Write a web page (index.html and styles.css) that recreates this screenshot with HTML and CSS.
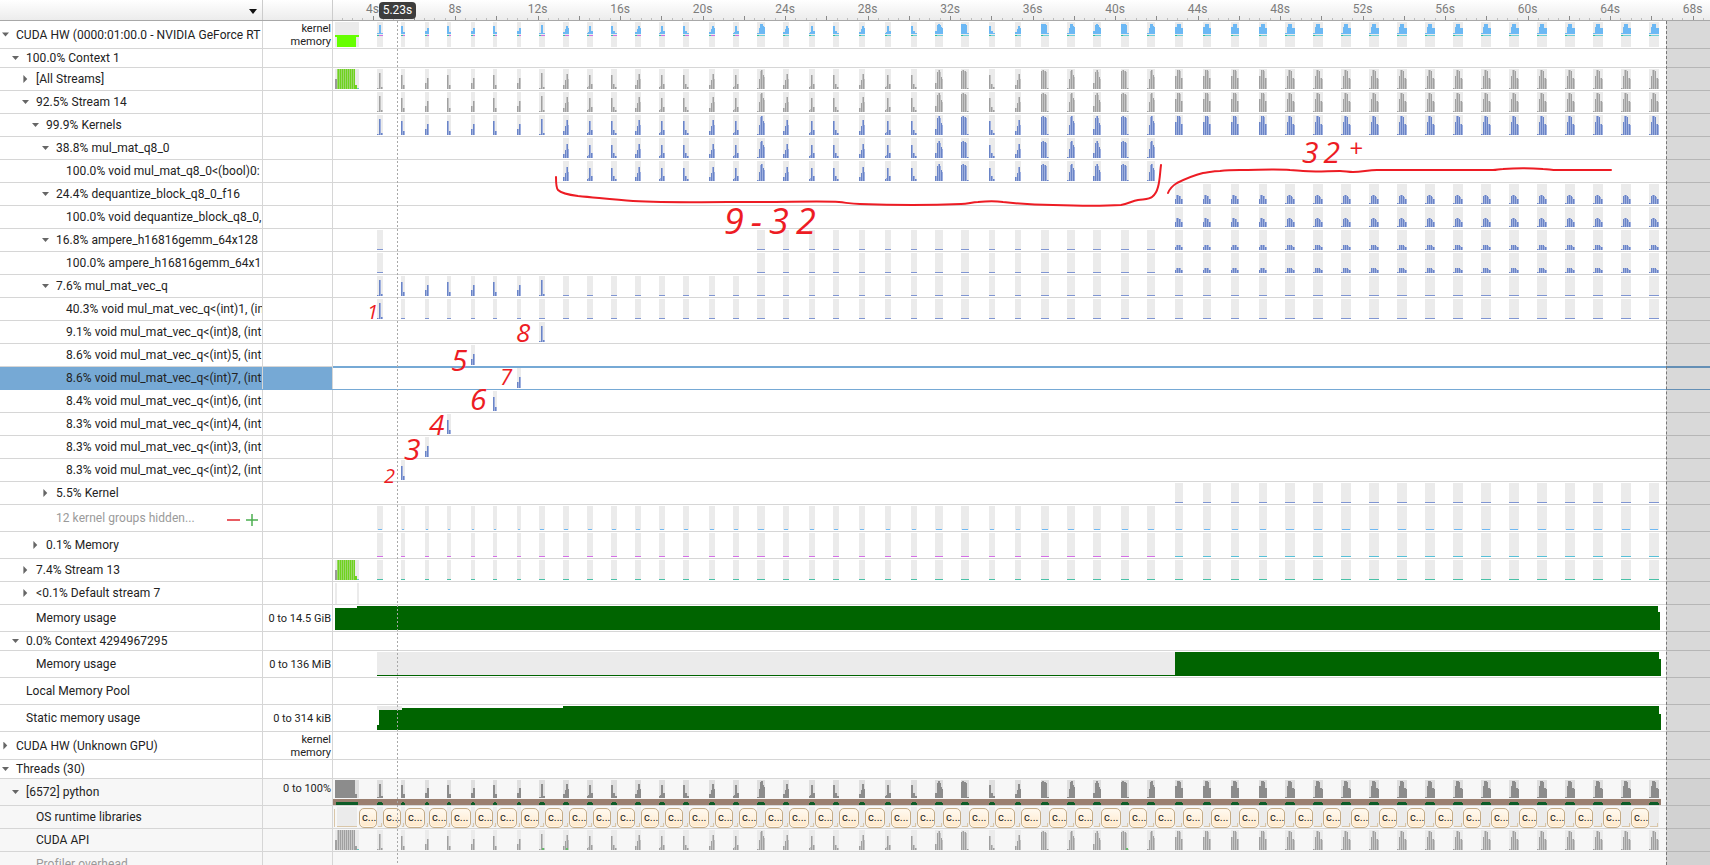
FILE: index.html
```html
<!DOCTYPE html>
<html lang="en">
<head>
    <meta charset="UTF-8">
    <title>Timeline View</title>
    <link rel="stylesheet" href="styles.css">
</head>
<body>
<div id="timeline">
    <div class="header">
        <div class="label"><i class="menu"></i></div>
        <div class="info"></div>
        <div class="ruler" id="ruler"></div>
    </div>

    <div class="row hw"><div class="label lvl0"><i class="arrow down"></i>CUDA HW (0000:01:00.0 - NVIDIA GeForce RT</div><div class="info">kernel<br>memory</div><div class="track" data-kind="hw"></div></div>
    <div class="row ctx"><div class="label lvl1"><i class="arrow down"></i>100.0% Context 1</div><div class="info"></div><div class="track"></div></div>
    <div class="row"><div class="label lvl2"><i class="arrow right"></i>[All Streams]</div><div class="info"></div><div class="track" data-kind="all"></div></div>
    <div class="row"><div class="label lvl2"><i class="arrow down"></i>92.5% Stream 14</div><div class="info"></div><div class="track" data-kind="gray"></div></div>
    <div class="row"><div class="label lvl3"><i class="arrow down"></i>99.9% Kernels</div><div class="info"></div><div class="track" data-kind="kernels"></div></div>
    <div class="row"><div class="label lvl4"><i class="arrow down"></i>38.8% mul_mat_q8_0</div><div class="info"></div><div class="track" data-kind="q8"></div></div>
    <div class="row"><div class="label lvl5">100.0% void mul_mat_q8_0&lt;(bool)0:</div><div class="info"></div><div class="track" data-kind="q8"></div></div>
    <div class="row"><div class="label lvl4"><i class="arrow down"></i>24.4% dequantize_block_q8_0_f16</div><div class="info"></div><div class="track" data-kind="deq"></div></div>
    <div class="row"><div class="label lvl5">100.0% void dequantize_block_q8_0,</div><div class="info"></div><div class="track" data-kind="deq"></div></div>
    <div class="row"><div class="label lvl4"><i class="arrow down"></i>16.8% ampere_h16816gemm_64x128</div><div class="info"></div><div class="track" data-kind="amp"></div></div>
    <div class="row"><div class="label lvl5">100.0% ampere_h16816gemm_64x1</div><div class="info"></div><div class="track" data-kind="amp"></div></div>
    <div class="row"><div class="label lvl4"><i class="arrow down"></i>7.6% mul_mat_vec_q</div><div class="info"></div><div class="track" data-kind="vec"></div></div>
    <div class="row"><div class="label lvl5">40.3% void mul_mat_vec_q&lt;(int)1, (in</div><div class="info"></div><div class="track" data-kind="vec1"></div></div>
    <div class="row"><div class="label lvl5">9.1% void mul_mat_vec_q&lt;(int)8, (int</div><div class="info"></div><div class="track" data-kind="one" data-x="539"></div></div>
    <div class="row"><div class="label lvl5">8.6% void mul_mat_vec_q&lt;(int)5, (int</div><div class="info"></div><div class="track" data-kind="one" data-x="471"></div></div>
    <div class="row selected"><div class="label lvl5">8.6% void mul_mat_vec_q&lt;(int)7, (int</div><div class="info"></div><div class="track" data-kind="one" data-x="517"></div></div>
    <div class="row"><div class="label lvl5">8.4% void mul_mat_vec_q&lt;(int)6, (int</div><div class="info"></div><div class="track" data-kind="one" data-x="493"></div></div>
    <div class="row"><div class="label lvl5">8.3% void mul_mat_vec_q&lt;(int)4, (int</div><div class="info"></div><div class="track" data-kind="one" data-x="447"></div></div>
    <div class="row"><div class="label lvl5">8.3% void mul_mat_vec_q&lt;(int)3, (int</div><div class="info"></div><div class="track" data-kind="one" data-x="425"></div></div>
    <div class="row"><div class="label lvl5">8.3% void mul_mat_vec_q&lt;(int)2, (int</div><div class="info"></div><div class="track" data-kind="one" data-x="401"></div></div>
    <div class="row"><div class="label lvl4"><i class="arrow right"></i>5.5% Kernel</div><div class="info"></div><div class="track" data-kind="kernel55"></div></div>
    <div class="row tall">
        <div class="label lvl4 muted">12 kernel groups hidden...
            <svg class="group-btns" width="32" height="12" viewBox="0 0 32 12"><path class="minus" d="M0 6H13"/><path class="plus" d="M19 6H31M25 0V12"/></svg>
        </div>
        <div class="info"></div><div class="track" data-kind="hidden"></div>
    </div>
    <div class="row tall"><div class="label lvl3"><i class="arrow right"></i>0.1% Memory</div><div class="info"></div><div class="track" data-kind="memory"></div></div>
    <div class="row"><div class="label lvl2"><i class="arrow right"></i>7.4% Stream 13</div><div class="info"></div><div class="track" data-kind="stream13"></div></div>
    <div class="row"><div class="label lvl2"><i class="arrow right"></i>&lt;0.1% Default stream 7</div><div class="info"></div><div class="track" data-kind="default"></div></div>
    <div class="row tall"><div class="label lvl2">Memory usage</div><div class="info">0 to 14.5 GiB</div><div class="track" data-kind="mem1"></div></div>
    <div class="row ctx"><div class="label lvl1"><i class="arrow down"></i>0.0% Context 4294967295</div><div class="info"></div><div class="track"></div></div>
    <div class="row tall"><div class="label lvl2">Memory usage</div><div class="info">0 to 136 MiB</div><div class="track" data-kind="mem2"></div></div>
    <div class="row tall"><div class="label lvl1">Local Memory Pool</div><div class="info"></div><div class="track"></div></div>
    <div class="row tall"><div class="label lvl1">Static memory usage</div><div class="info">0 to 314 kiB</div><div class="track" data-kind="static"></div></div>
    <div class="row hw"><div class="label lvl0"><i class="arrow right"></i>CUDA HW (Unknown GPU)</div><div class="info">kernel<br>memory</div><div class="track"></div></div>
    <div class="row ctx"><div class="label lvl0"><i class="arrow down"></i>Threads (30)</div><div class="info"></div><div class="track"></div></div>
    <div class="row tall thread"><div class="label lvl1"><i class="arrow down"></i>[6572] python</div><div class="info top">0 to 100%</div><div class="track" data-kind="python"></div></div>
    <div class="row thread"><div class="label lvl2">OS runtime libraries</div><div class="info"></div><div class="track" data-kind="osrt"></div></div>
    <div class="row thread"><div class="label lvl2">CUDA API</div><div class="info"></div><div class="track" data-kind="api"></div></div>
    <div class="row thread last"><div class="label lvl2 muted">Profiler overhead</div><div class="info"></div><div class="track"></div></div>

    <div class="out-of-range"></div>
    <div class="playhead"></div>
    <div class="time-tip">5.23s</div>

    <!-- red marks somebody drew on top of the capture -->
    <svg class="notes" width="1710" height="865" viewBox="0 0 1710 865">
        <path d="M556 177C556 183 556 188 558 190C562 194 570 195 578 196C600 198 615 200 633 201C670 203 720 202 755 202C790 202 825 201 839 202C848 203 852 204 860 204C890 205 935 205 961 204C968 204 972 202 978 202C988 201 996 201 1003 202C1020 204 1035 205 1053 205C1080 206 1105 206 1121 205C1128 204 1132 201 1138 200C1145 199 1150 199 1152 197C1156 194 1157 191 1158 187C1160 180 1160 172 1161 165"/>
        <path d="M1168 193C1170 188 1172 186 1177 183C1185 179 1195 175 1203 173C1210 172 1214 171 1220 171C1228 170 1234 170 1240 170C1258 170 1275 169 1290 170C1296 170 1298 171 1303 171C1315 172 1328 171 1340 171C1345 171 1348 172 1353 172C1362 172 1368 170 1377 170C1415 170 1455 170 1493 170C1497 170 1499 169 1503 169C1516 168 1530 168 1543 169C1548 169 1551 170 1557 170C1575 170 1593 170 1611 170"/>
        <text class="n20" x="367" y="319">1</text>
        <text class="n26" x="516" y="342">8</text>
        <text class="n30" x="451" y="371">5</text>
        <text class="n22" x="500" y="385">7</text>
        <text class="n30" x="470" y="410">6</text>
        <text class="n28" x="429" y="435">4</text>
        <text class="n30" x="404" y="460">3</text>
        <text class="n20" x="384" y="483">2</text>
        <text class="n36 wider" x="724" y="234">9-32</text>
        <text class="n30 wide" x="1302" y="163">32</text>
        <text class="n24" x="1349" y="157">+</text>
    </svg>
</div>
<script src="app.js"></script>
</body>
</html>
```
FILE: styles.css
```css
*{
    margin:0;
    padding:0;
    box-sizing:border-box;
}
html,body{
    height:100%;
    overflow:hidden;
    background:#ffffff;
}
#timeline{
    position:relative;
    width:1710px;
    height:865px;
    overflow:hidden;
    font-family:Roboto,"Liberation Sans",sans-serif;
    font-size:12px;
    color:#222222;
}
.header{
    display:grid;
    grid-template-columns:263px 70px 1fr;
    height:21px;
    border-bottom:1px solid #a8a8a8;
    background:linear-gradient(#ffffff,#ececec);
}
.header .label,.header .info{
    display:flex;
    justify-content:flex-end;
    align-items:center;
    padding:0;
    border-right:1px solid #cccccc;
}
.menu{
    width:0;
    height:0;
    margin:3px 5px 0 0;
    border-left:4px solid transparent;
    border-right:4px solid transparent;
    border-top:5px solid #111111;
}
.ruler{
    position:relative;
}
.ruler svg{
    position:absolute;
    left:0;
    top:0;
}
.ruler span{
    position:absolute;
    top:2px;
    transform:translateX(-50%);
    color:#7c7c7c;
    line-height:14px;
}
.row{
    display:grid;
    grid-template-columns:263px 70px 1fr;
    height:23px;
    border-bottom:1px solid #d6d6d6;
}
.row.tall{
    height:27px;
}
.row.hw{
    height:28px;
}
.row.ctx{
    height:19px;
}
.row.thread{
    background:#f7f7f7;
}
.row.last{
    border-bottom:0;
}
.label{
    display:flex;
    align-items:center;
    overflow:hidden;
    white-space:nowrap;
    letter-spacing:.05px;
    border-right:1px solid #d6d6d6;
}
.lvl0{padding-left:16px;}
.lvl1{padding-left:26px;}
.lvl2{padding-left:36px;}
.lvl3{padding-left:46px;}
.lvl4{padding-left:56px;}
.lvl5{padding-left:66px;}
.muted{
    color:#9a9a9a;
}
.arrow{
    flex:none;
    width:7px;
    height:8px;
    margin-left:-14px;
    margin-right:7px;
    background:#666666;
}
.arrow.down{
    clip-path:polygon(0 25%,100% 25%,50% 75%);
}
.arrow.right{
    clip-path:polygon(20% 0,75% 50%,20% 100%);
}
.group-btns{
    flex:none;
    margin-left:32px;
    margin-top:3px;
}
.group-btns path{
    fill:none;
    stroke-width:1.5;
}
.minus{
    stroke:#e0262e;
}
.plus{
    stroke:#4caf50;
}
.info{
    display:flex;
    align-items:center;
    justify-content:flex-end;
    padding-right:1px;
    font-size:11px;
    text-align:right;
    line-height:13px;
    white-space:nowrap;
    border-right:1px solid #d6d6d6;
}
.info.top{
    align-items:flex-start;
    padding-top:3px;
}
.track{
    position:relative;
    overflow:hidden;
}
.track svg{
    display:block;
}
.selected .label,.selected .info{
    background:#76a9d5;
}
.selected{
    border-bottom-color:#76a9d5;
}
.selected .track{
    box-shadow:0 -1px 0 #76a9d5,inset 0 1px 0 #76a9d5;
    overflow:visible;
}
.rt-box{
    position:absolute;
    top:2px;
    height:20px;
    padding-left:2px;
    overflow:hidden;
    border:1px solid #c4ab86;
    border-radius:5px;
    background:linear-gradient(#fffaf1,#ffe8c9);
    box-shadow:inset 0 0 0 1px #fff6e8;
    color:#222222;
    font-size:11px;
    line-height:17px;
    white-space:nowrap;
}
.out-of-range{
    position:absolute;
    left:1666px;
    top:21px;
    right:0;
    bottom:0;
    border-left:1px dashed #777777;
    background:rgba(0,0,0,.15);
}
.playhead{
    position:absolute;
    left:397px;
    top:21px;
    bottom:0;
    width:1px;
    background:repeating-linear-gradient(#a8a8a8 0 2px,transparent 2px 4px);
}
.time-tip{
    position:absolute;
    left:379px;
    top:2px;
    width:37px;
    height:17px;
    border-radius:4px;
    background:#3d3d3d;
    color:#ffffff;
    text-align:center;
    line-height:17px;
}
.notes{
    position:absolute;
    left:0;
    top:0;
    pointer-events:none;
}
.notes path{
    fill:none;
    stroke:#ed1c24;
    stroke-width:2;
    stroke-linecap:round;
}
.notes text{
    fill:#ed1c24;
    font-family:"Open Sans",sans-serif;
    font-style:italic;
}
.notes .wide{
    letter-spacing:5px;
}
.notes .wider{
    letter-spacing:7px;
}
.n20{font-size:20px;}
.n22{font-size:22px;}
.n24{font-size:24px;}
.n26{font-size:26px;}
.n28{font-size:28px;}
.n30{font-size:30px;}
.n36{font-size:36px;}
```
FILE: app.js
```js
var NS = 'http://www.w3.org/2000/svg';
var TRACK_LEFT = 333;
var BLUE = ['#6a84c6', '#9fb0df'];
var GRAY = ['#a0a0a0', '#c4c4c4'];
var GREEN = ['#6fd21e', '#9ad86a'];
var STRIPES = ['#a0a0a0', '#c8c8c8'];

// left edge and width of every burst, read off the capture
var xs = [377,401,425,447,471,493,517,539,563,587,611,635,659,683,709,733,757,783,809,833,859,885,911,935,961,989,1015,1041,1067,1093,1121,1147,
    1175,1203,1231,1259,1285,1313,1341,1369,1397,1425,1453,1481,1509,1537,1565,1593,1621,1649];
var ws = [6,4,4,4,4,4,4,6,6,6,6,6,6,6,6,6,8,6,6,6,6,6,6,8,8,6,6,8,8,8,8,8,
    8,8,8,8,10,10,10,10,10,10,10,10,10,10,10,10,10,10];
var bursts = [];
for (var i = 0; i < xs.length; i++) {
    bursts.push({x: xs[i], w: ws[i], i: i});
}

var P4 = [[.3,.3,.55,.55],[.7,.7,.2,.2]];
var P6 = [[.05,.05,.8,.8,.12,.12],[.1,.15,.7,.7,.25,.25],[.7,.7,.25,.25,.1,.1],[.2,.2,.45,.75,.75,.5]];
var P8 = [[.9,.95,.95,.9,.9,.85,.05,.05],[.05,.05,.5,.9,.95,.95,.7,.6],[.3,.3,.85,.95,.95,.85,.6,.5]];
var LATE8 = [.65,.65,.95,.95,.95,.9,.55,.55];
var LATE10 = [.05,.05,.65,.95,.95,.95,.9,.55,.55,.5];
var SMALL8 = [.5,.85,.9,.9,.75,.75,.5,.45];
var SMALL10 = [.05,.05,.8,.85,.9,.9,.75,.7,.5,.45];

function shape(b) {
    if (b.w == 4) return P4[b.i % 2];
    if (b.i > 31) return b.w == 8 ? LATE8 : LATE10;
    if (b.w == 6) return P6[b.i == 0 || b.i == 7 ? 0 : 1 + b.i % 3];
    return P8[b.i % 3];
}

function smallShape(b) {
    return b.w == 8 ? SMALL8 : SMALL10;
}

function rect(svg, x, y, w, h, fill) {
    var r = document.createElementNS(NS, 'rect');
    r.setAttribute('x', x);
    r.setAttribute('y', y);
    r.setAttribute('width', w);
    r.setAttribute('height', h);
    r.setAttribute('fill', fill);
    svg.appendChild(r);
}

function bars(svg, b, base, max, heights, colors) {
    for (var k = 0; k < heights.length; k++) {
        var h = Math.max(1, Math.round(heights[k] * max));
        rect(svg, b.x + k, base - h, 1, h, colors[k % colors.length]);
    }
}

function burstBg(svg, b, top, h, color) {
    rect(svg, b.x, top, b.w, h, color || '#ebebeb');
}

// the solid block at the start of a run, 335 to 359
function bigBlock(svg, top, base, colors, left) {
    rect(svg, 335, top, 24, base - top, '#ebebeb');
    rect(svg, 335, base - 10, 2, 10, left);
    for (var x = 337; x < 355; x++) {
        rect(svg, x, top, 1, base - top, colors[x % 2]);
    }
    rect(svg, 355, base - 4, 2, 4, colors[0]);
    rect(svg, 357, base - 1, 2, 1, '#66c8c0');
}

function drawTrack(track) {
    var kind = track.getAttribute('data-kind');
    if (!kind) return;
    var box = track.getBoundingClientRect();
    var top = box.top;
    var height = Math.round(box.height);
    var svg = document.createElementNS(NS, 'svg');
    svg.setAttribute('width', box.width);
    svg.setAttribute('height', height);
    svg.setAttribute('viewBox', TRACK_LEFT + ' ' + top + ' ' + box.width + ' ' + height);
    track.appendChild(svg);

    var bgTop = top + 1;
    var bgH = height - 2;
    var base = top + height - 1;
    var n, b, x;

    for (n = 0; n < bursts.length; n++) {
        b = bursts[n];
        x = b.x;
        if (kind == 'hw') {
            burstBg(svg, b, bgTop, bgH);
            bars(svg, b, top + 13, 11, shape(b), ['#6cb8f4']);
            rect(svg, x, top + 14, b.w, 1, b.i < 16 ? '#d070e0' : '#6fd0d8');
            rect(svg, x, top + 14, 2, 1, b.i < 16 ? '#35c0a6' : '#2fc09a');
        } else if (kind == 'all' || kind == 'gray' || kind == 'api') {
            burstBg(svg, b, bgTop, bgH);
            bars(svg, b, base, 20, shape(b), GRAY);
            if (kind == 'api' && (x == 539 || x == 563 || x == 1121)) rect(svg, x + b.w - 3, base - 2, 2, 2, '#66bb6a');
        } else if (kind == 'kernels') {
            burstBg(svg, b, bgTop, bgH);
            bars(svg, b, base, 20, shape(b), BLUE);
        } else if (kind == 'q8') {
            if (x < 563 || x > 1147) continue;
            burstBg(svg, b, bgTop, bgH);
            bars(svg, b, base, 18, shape(b), BLUE);
        } else if (kind == 'deq') {
            if (x < 1175) continue;
            burstBg(svg, b, bgTop, bgH);
            bars(svg, b, base, 10, smallShape(b), BLUE);
        } else if (kind == 'amp') {
            if (x != 377 && x < 757) continue;
            burstBg(svg, b, bgTop, bgH);
            if (x < 1175) rect(svg, x, base - 1, b.w, 1, '#7f95d2');
            else bars(svg, b, base, 6, smallShape(b), BLUE);
        } else if (kind == 'vec') {
            burstBg(svg, b, bgTop, bgH);
            if (x <= 539) bars(svg, b, base, 20, shape(b), BLUE);
            else rect(svg, x, base - 1, b.w, 1, '#7f95d2');
        } else if (kind == 'vec1') {
            burstBg(svg, b, bgTop, bgH);
            if (x == 377) bars(svg, b, base, 20, shape(b), BLUE);
            else rect(svg, x, base - 1, b.w, 1, '#7f95d2');
        } else if (kind == 'one') {
            if (x != +track.getAttribute('data-x')) continue;
            burstBg(svg, b, bgTop, bgH);
            bars(svg, b, base, 20, shape(b), BLUE);
        } else if (kind == 'kernel55') {
            if (x < 1175) continue;
            burstBg(svg, b, bgTop, bgH);
            rect(svg, x, base - 1, b.w, 1, '#7f95d2');
        } else if (kind == 'hidden') {
            burstBg(svg, b, bgTop, bgH);
            rect(svg, x + 1, base - 1, b.w - 2, 1, '#6cb8f4');
        } else if (kind == 'memory') {
            burstBg(svg, b, bgTop, bgH);
            rect(svg, x, base - 1, b.w, 1, b.i < 32 ? '#d46fe6' : '#56c0d8');
        } else if (kind == 'stream13') {
            burstBg(svg, b, bgTop, bgH);
            rect(svg, x, base - 1, b.w, 1, '#46c0a6');
        } else if (kind == 'python') {
            burstBg(svg, b, bgTop, 18, '#dfdfdf');
            bars(svg, b, top + 19, 18, shape(b), ['#8c8c8c']);
        } else if (kind == 'osrt') {
            burstBg(svg, b, bgTop, bgH);
            rect(svg, x + b.w - 2, base - 4, 1, 4, '#d9c6a8');
            rect(svg, x + 1, base - 1, b.w - 3, 1, '#d9c6a8');
        }
    }

    if (kind == 'hw') {
        rect(svg, 335, top + 1, 24, height - 2, '#ebebeb');
        rect(svg, 335, top + 14, 24, 2, '#66ff00');
        rect(svg, 337, top + 16, 19, 10, '#66ff00');
    }
    if (kind == 'all' || kind == 'stream13') bigBlock(svg, bgTop, base, GREEN, '#9a9a9a');
    if (kind == 'api') bigBlock(svg, bgTop, base, STRIPES, STRIPES[0]);
    if (kind == 'default') {
        rect(svg, 335, bgTop, 2, bgH + 1, '#ebebeb');
        rect(svg, 357, bgTop, 2, bgH + 1, '#ebebeb');
    }
    if (kind == 'mem1') {
        rect(svg, 335, top + 3, 22, height - 4, '#006400');
        rect(svg, 357, top + 1, 1301, height - 2, '#006400');
        rect(svg, 1658, top + 7, 2, height - 8, '#006400');
    }
    if (kind == 'mem2') {
        rect(svg, 377, top + 1, 798, height - 3, '#ebebeb');
        rect(svg, 377, base - 1, 798, 1, '#006400');
        rect(svg, 1175, top + 1, 484, height - 2, '#006400');
        rect(svg, 1659, top + 8, 2, height - 9, '#006400');
    }
    if (kind == 'static') {
        rect(svg, 377, top + 1, 25, 4, '#ebebeb');
        rect(svg, 377, top + 20, 2, height - 21, '#006400');
        rect(svg, 379, top + 5, 23, height - 6, '#006400');
        rect(svg, 402, top + 3, 161, height - 4, '#006400');
        rect(svg, 563, top + 1, 1096, height - 2, '#006400');
        rect(svg, 1659, top + 9, 2, height - 10, '#006400');
    }
    if (kind == 'python') {
        rect(svg, 335, bgTop, 24, 18, '#dfdfdf');
        rect(svg, 335, bgTop, 20, 18, '#8c8c8c');
        rect(svg, 355, top + 15, 2, 4, '#8c8c8c');
        rect(svg, 333, top + 20, 1328, 6, '#9a7f70');
        rect(svg, 336, top + 23, 22, 3, '#0d5c28');
        for (n = 0; n < bursts.length; n++) {
            b = bursts[n];
            rect(svg, b.x + 1, top + 23, b.w - 2, 3, '#0d5c28');
            rect(svg, b.x, top + 24, b.w, 2, '#0d5c28');
        }
    }
    if (kind == 'osrt') {
        rect(svg, 337, bgTop, 20, bgH, '#ebebeb');
        rect(svg, 334, top + 3, 1, bgH - 2, '#d9c6a8');
        rect(svg, 337, base - 1, 20, 1, '#d9c6a8');
        var from = 359;
        for (n = 0; n < bursts.length; n++) {
            var el = document.createElement('div');
            el.className = 'rt-box';
            el.style.left = (from - TRACK_LEFT) + 'px';
            el.style.width = (bursts[n].x - from) + 'px';
            el.textContent = 'c...';
            track.appendChild(el);
            from = bursts[n].x + bursts[n].w;
        }
    }
}

function drawRuler() {
    var ruler = document.getElementById('ruler');
    var svg = document.createElementNS(NS, 'svg');
    svg.setAttribute('width', 1377);
    svg.setAttribute('height', 20);
    svg.setAttribute('viewBox', TRACK_LEFT + ' 0 1377 20');
    ruler.appendChild(svg);
    // 0s would sit at x=290, one second is 20.625px
    for (var t = 2.5; t <= 69; t += 0.5) {
        var x = Math.round(290 + t * 20.625);
        var major = t % 2 == 0;
        rect(svg, x, major ? 16 : 18, 1, major ? 4 : 2, major ? '#8a8a8a' : '#bdbdbd');
    }
    for (var s = 4; s <= 68; s += 4) {
        var label = document.createElement('span');
        label.textContent = s + 's';
        label.style.left = (290 + s * 20.625 - TRACK_LEFT) + 'px';
        ruler.appendChild(label);
    }
}

drawRuler();
var tracks = document.querySelectorAll('.track');
for (var t = 0; t < tracks.length; t++) {
    drawTrack(tracks[t]);
}
```
